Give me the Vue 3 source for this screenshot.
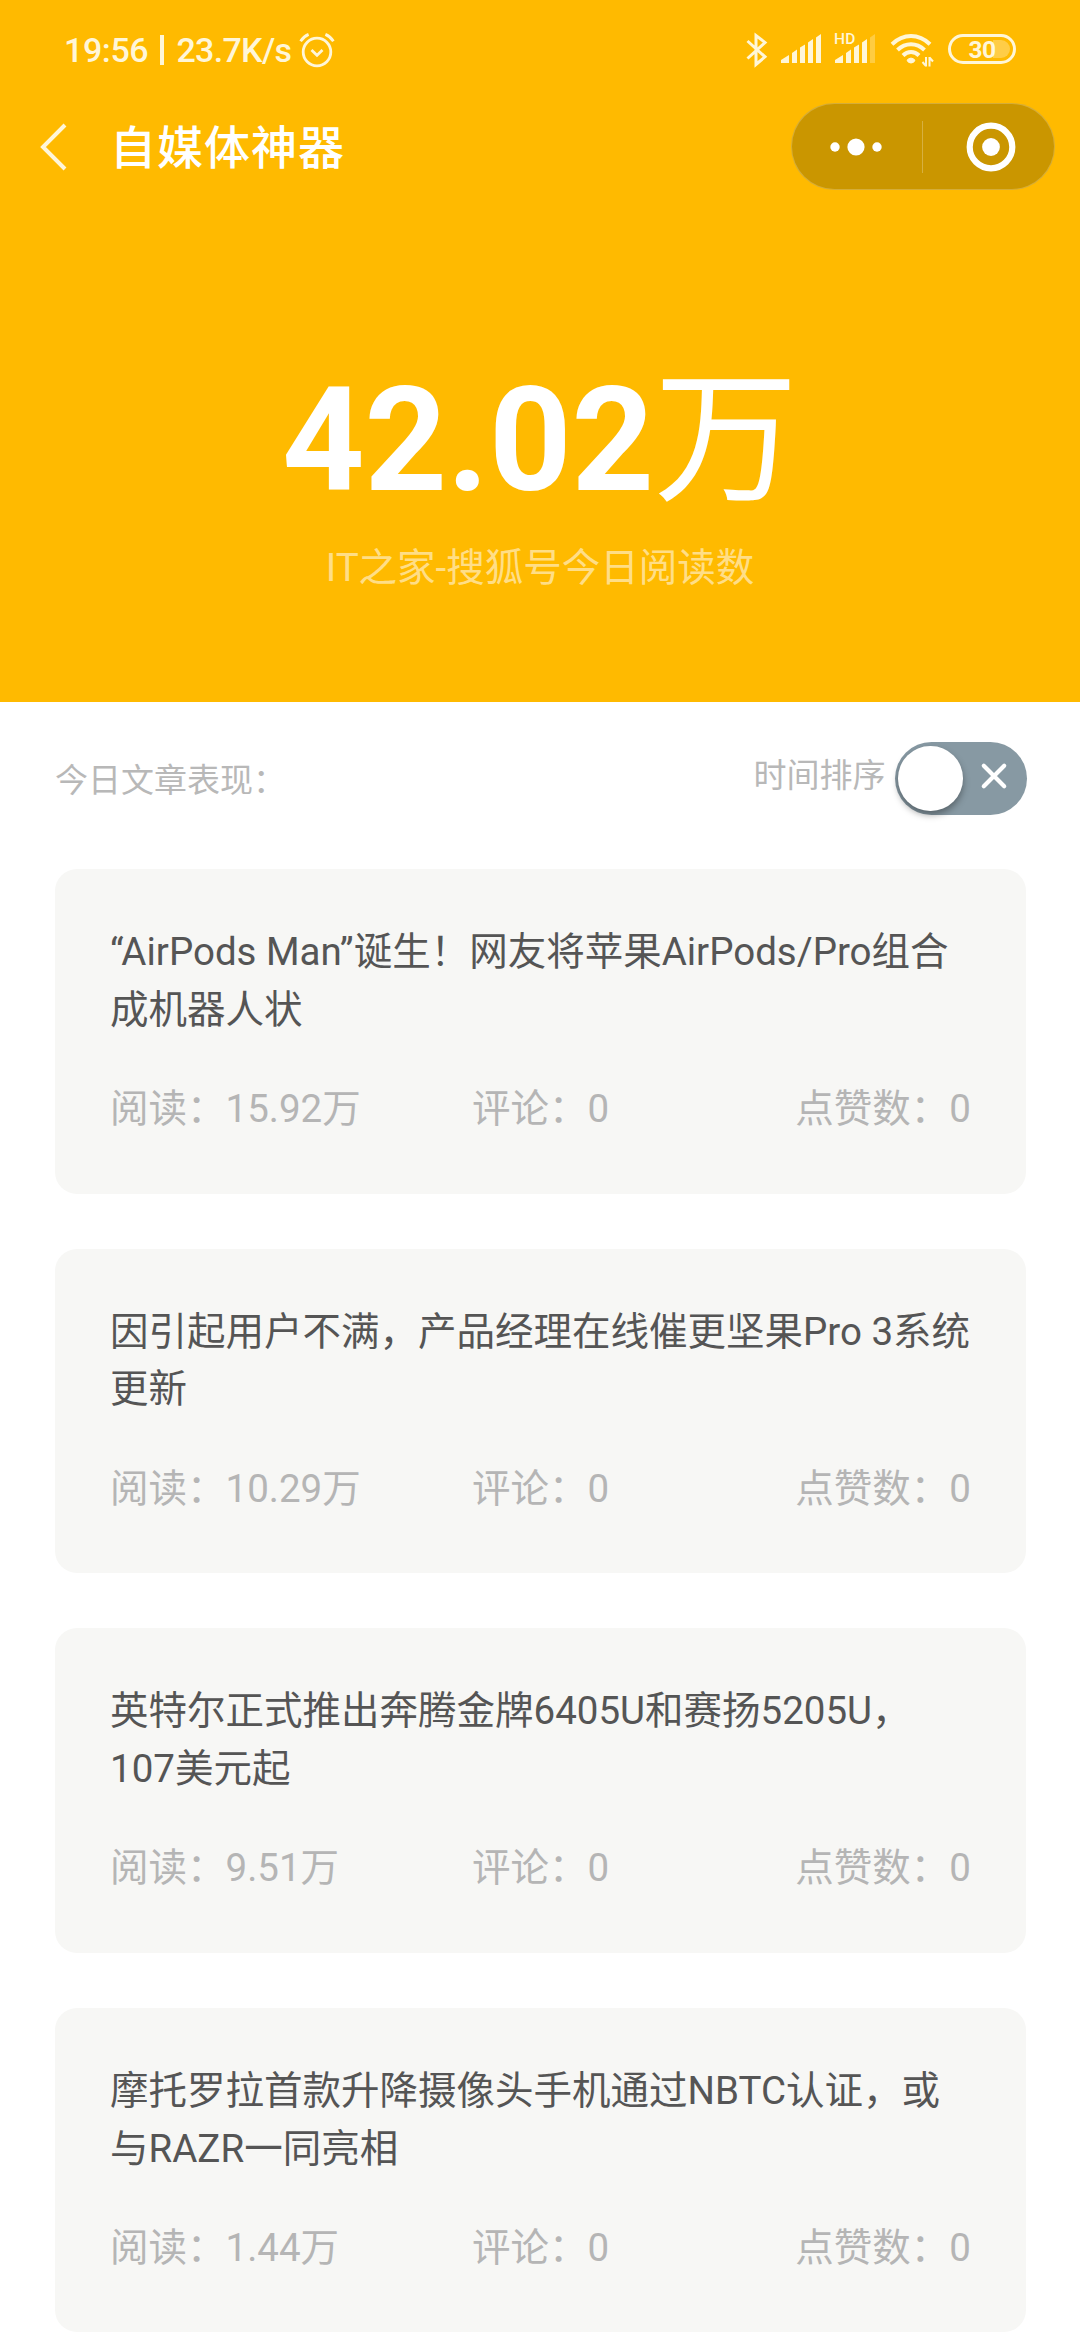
<script setup>
const bars = [
  'M0 29V26L8 21V29Z',
  'M11 29V19L16 15.5V29Z',
  'M19 29V13.5L24 10.5V29Z',
  'M27 29V8.5L32 5V29Z',
  'M35 29V3.5L40 0V29Z',
]

const articles = [
  { title: '“AirPods Man”诞生！网友将苹果AirPods/Pro组合\n成机器人状', reads: '15.92万', comments: 0, likes: 0 },
  { title: '因引起用户不满，产品经理在线催更坚果Pro 3系统\n更新', reads: '10.29万', comments: 0, likes: 0 },
  { title: '英特尔正式推出奔腾金牌6405U和赛扬5205U，\n107美元起', reads: '9.51万', comments: 0, likes: 0 },
  { title: '摩托罗拉首款升降摄像头手机通过NBTC认证，或\n与RAZR一同亮相', reads: '1.44万', comments: 0, likes: 0 },
]
</script>

<template>
  <div class="page">
    <header class="hero">
      <div class="status">
        <span class="clock">19:56</span>
        <i class="bar"></i>
        <span class="speed">23.7K/s</span>
        <svg class="alarm" width="36" height="36" viewBox="0 0 36 36" fill="none" stroke="currentColor" stroke-width="2.8">
          <circle cx="18" cy="20" r="13.8" />
          <path d="M12.5 18l5.5 5.2 5.5-5.2M1.6 9.3Q4.5 4.6 9.6 2.4M26.4 2.4Q31.5 4.6 34.4 9.3" />
        </svg>
        <div class="indicators">
          <svg class="bluetooth" width="22" height="36" viewBox="0 0 22 36" fill="none" stroke="currentColor" stroke-width="3">
            <path d="M1.5 9L19 24.8L10 32.5V3.5L19 10.5L1.5 26.5" />
          </svg>
          <svg class="signal" width="40" height="29" viewBox="0 0 40 29" fill="currentColor">
            <path v-for="d in bars" :key="d" :d="d" />
          </svg>
          <div class="signal-hd">
            <svg width="40" height="29" viewBox="0 0 40 29" fill="currentColor">
              <path d="M0 29V26L8 21V29ZM11 29V19L16 15.5V29ZM19 29V13.5L24 10.5V29ZM27 29V8.5L32 5V29Z" />
              <path d="M35 29V3.5L40 0V29Z" opacity=".3" />
            </svg>
            <span class="hd">HD</span>
          </div>
          <svg class="wifi" width="44" height="36" viewBox="0 0 44 36" fill="none" stroke="currentColor" stroke-width="4">
            <path d="M2 12.2Q10.5 4 21 4T40 12.2" />
            <path d="M7.5 18Q13.5 12.2 21 12.2T34.500 18" />
            <path d="M13 23.500Q16.500 20 21 20T29 23.500" />
            <path d="M17 28.200Q21 24 25 28.200Q24 31 21 31Q18 31 17 28.200Z" fill="currentColor" stroke-width="1" />
            <path d="M36 25V34.500M39.500 34.500V25M32.500 30L36 34M39.500 25.500L43 29.500" stroke-width="2" />
          </svg>
          <div class="battery"><i class="charge"></i><span class="level">30</span></div>
        </div>
      </div>

      <nav class="nav">
        <svg class="back" width="28" height="50" viewBox="0 0 28 50" fill="none" stroke="currentColor" stroke-width="4">
          <path d="M25 3L3 25L25 47" />
        </svg>
        <h1 class="app-title">自媒体神器</h1>
        <div class="capsule">
          <svg class="dots" width="54" height="20" viewBox="0 0 54 20" fill="#fff">
            <circle cx="6" cy="10" r="4.700" />
            <circle cx="27" cy="10" r="8.600" />
            <circle cx="48" cy="10" r="4.700" />
          </svg>
          <i class="divider"></i>
          <svg class="target" width="50" height="50" viewBox="0 0 50 50">
            <circle cx="25" cy="25" r="21.300" fill="none" stroke="#fff" stroke-width="6.200" />
            <circle cx="25" cy="25" r="8.900" fill="#fff" />
          </svg>
        </div>
      </nav>

      <div class="total">42.02<span class="unit">万</span></div>
      <div class="caption">IT之家-搜狐号今日阅读数</div>
    </header>

    <section class="toolbar">
      <span class="heading">今日文章表现：</span>
      <span class="sort">时间排序</span>
      <div class="switch">
        <i class="knob"></i>
        <svg class="cross" width="30" height="30" viewBox="0 0 30 30" stroke="#fff" stroke-width="4.200" stroke-linecap="round">
          <path d="M4.800 4.800L25.200 25.200M25.200 4.800L4.800 25.200" />
        </svg>
      </div>
    </section>

    <main class="list">
      <article v-for="item in articles" :key="item.title" class="card">
        <h2 class="title">{{ item.title }}</h2>
        <div class="stats">
          <span>阅读：{{ item.reads }}</span>
          <span class="mid">评论：{{ item.comments }}</span>
          <span class="end">点赞数：{{ item.likes }}</span>
        </div>
      </article>
    </main>
  </div>
</template>

<style>
body {
  margin: 0;
  background: #fff;
}
</style>

<style scoped>
.page {
  width: 1080px;
  height: 2340px;
  overflow: hidden;
  background: #fff;
  font-family: Roboto, "Noto Sans CJK SC", sans-serif;
}
h1,
h2 {
  margin: 0;
  font-weight: 400;
}
svg,
i {
  display: block;
  flex: none;
}
.hero {
  height: 701.5px;
  background: #ffba00;
  color: #fff;
}
.status {
  display: flex;
  align-items: center;
  height: 100px;
  padding: 0 64px;
  color: #fff6d8;
  font-size: 34px;
  font-weight: 500;
  line-height: 100px;
}
.clock {
  width: 96px;
  letter-spacing: -0.4px;
}
.bar {
  width: 3.500px;
  height: 30px;
  background: currentColor;
}
.speed {
  width: 115px;
  margin-left: 13px;
  letter-spacing: -0.700px;
  white-space: nowrap;
}
.alarm {
  margin-left: 7px;
}
.indicators {
  display: flex;
  align-items: center;
  margin-left: auto;
}
.signal {
  margin: -3px 0 0 13px;
}
.signal-hd {
  position: relative;
  margin: -3px 0 0 14px;
}
.hd {
  position: absolute;
  left: -1px;
  top: -2px;
  font-size: 15.500px;
  line-height: 14px;
  letter-spacing: 0.3px;
}
.wifi {
  margin-left: 15px;
}
.battery {
  position: relative;
  box-sizing: border-box;
  width: 68px;
  height: 30px;
  margin: -2px 0 0 14px;
  border: 3px solid currentColor;
  border-radius: 15px;
  line-height: 26px;
  text-align: center;
}
.charge {
  position: absolute;
  right: 3px;
  top: 3px;
  width: 17px;
  height: 18px;
  border-radius: 0 9px 9px 0;
  background: rgba(255, 255, 255, 0.28);
}
.level {
  display: block;
  font-size: 24.500px;
  font-weight: 700;
  letter-spacing: -0.500px;
}
.nav {
  display: flex;
  align-items: center;
  height: 93px;
  padding: 0 25.500px 0 40px;
}
.back {
  color: #fff6d8;
}
.app-title {
  margin: 3px 0 0 42px;
  font-size: 46px;
  font-weight: 500;
  line-height: 60px;
  letter-spacing: 1px;
}
.capsule {
  display: flex;
  align-items: center;
  box-sizing: border-box;
  width: 264px;
  height: 87px;
  margin-left: auto;
  border: 1px solid rgba(255, 255, 255, 0.22);
  border-radius: 44px;
  background: #ca9600;
}
.dots {
  margin-left: 37.500px;
}
.divider {
  width: 1px;
  height: 52px;
  margin-left: 38.500px;
  background: rgba(255, 255, 255, 0.25);
}
.target {
  margin-left: 43px;
}
.total {
  margin-top: 163px;
  font-size: 144px;
  font-weight: 700;
  line-height: 169px;
  text-align: center;
}
.unit {
  font-weight: 400;
}
.caption {
  margin-top: 14px;
  color: rgba(255, 255, 255, 0.54);
  font-size: 38.500px;
  line-height: 58px;
  text-align: center;
}
.toolbar {
  display: flex;
  align-items: center;
  height: 72.500px;
  padding: 40.500px 53.500px 54.500px 55px;
  color: #b8b8b8;
  font-size: 33px;
  line-height: 50px;
}
.heading {
  margin: 5px auto 0 0;
}
.sort {
  margin: -5px 9px 0 0;
}
.switch {
  display: flex;
  align-items: center;
  box-sizing: border-box;
  width: 132px;
  height: 72.500px;
  padding: 0 17.500px 0 3.500px;
  border-radius: 37px;
  background: #8799a3;
}
.knob {
  width: 64.500px;
  height: 64.500px;
  border-radius: 50%;
  background: #fff;
  box-shadow: 0 4px 7px rgba(0, 0, 0, 0.35);
}
.cross {
  margin: -4px 0 0 auto;
}
.list {
  display: flex;
  flex-direction: column;
  gap: 55px;
  padding: 0 54px 0 55px;
}
.card {
  display: flex;
  flex-direction: column;
  gap: 41.500px;
  box-sizing: border-box;
  height: 324.600px;
  padding: 54.100px 55px 55px;
  border-radius: 22px;
  background: #f7f7f5;
  font-size: 38.500px;
  line-height: 57.750px;
}
.title {
  color: #555;
  font-size: inherit;
  white-space: pre;
}
.stats {
  display: grid;
  grid-template-columns: repeat(3, 1fr);
  color: #b5b5b5;
}
.mid {
  text-align: center;
}
.end {
  text-align: right;
}
</style>
